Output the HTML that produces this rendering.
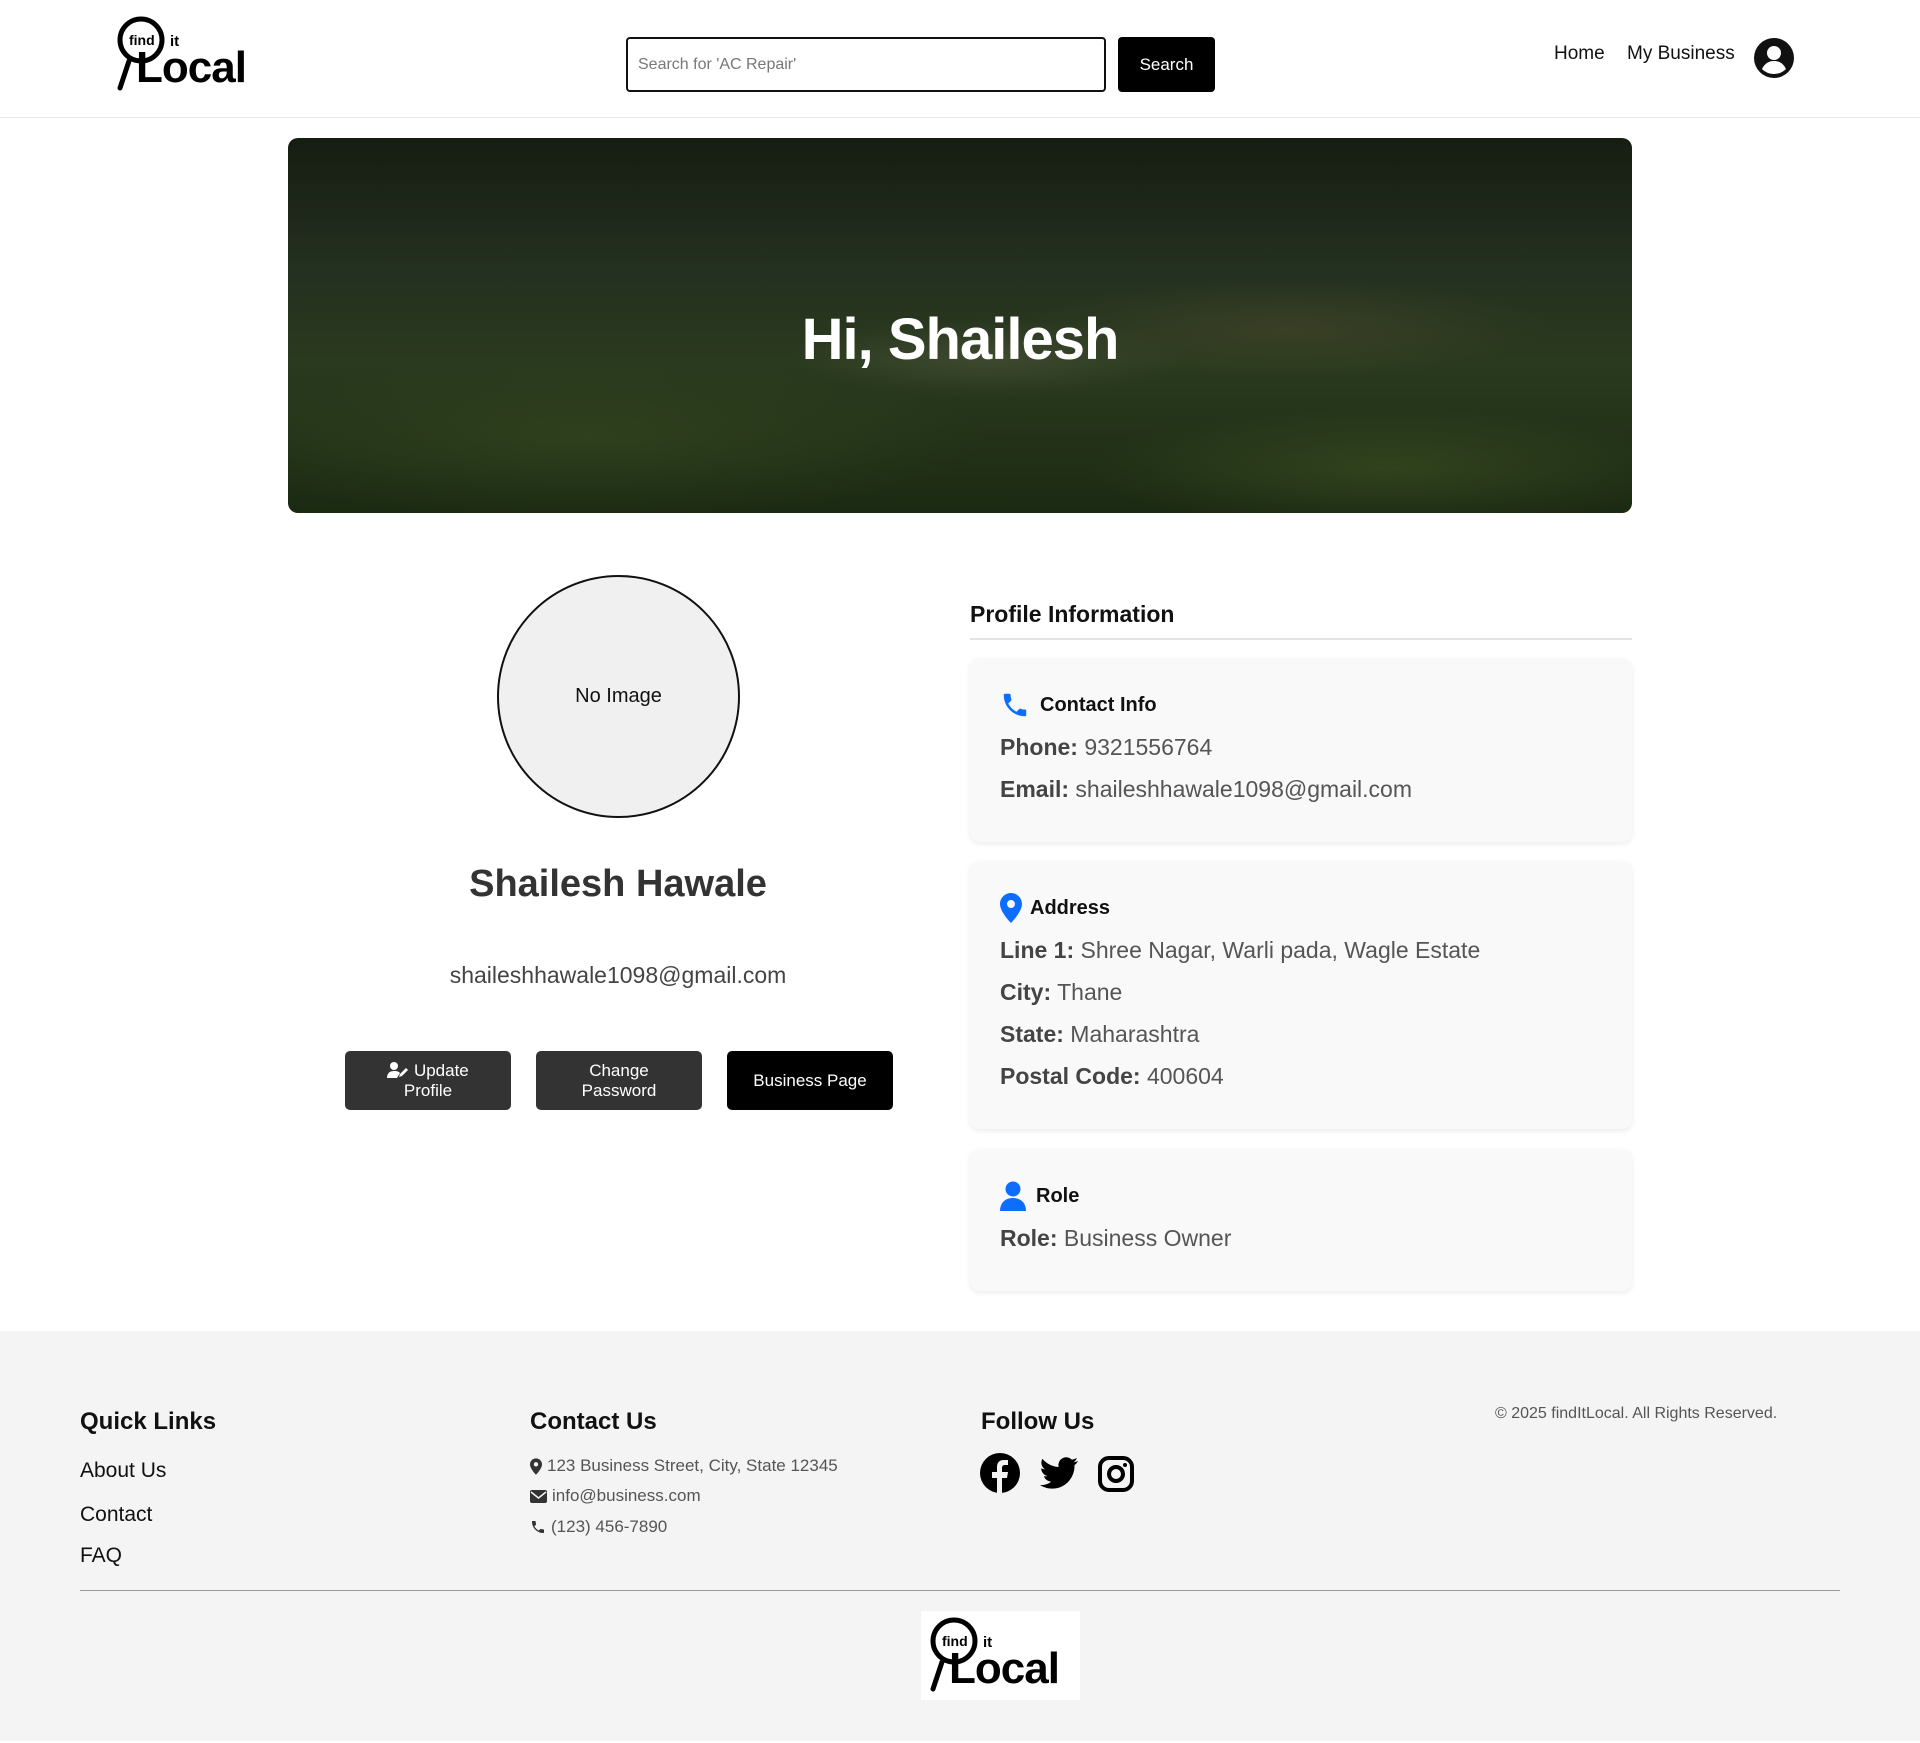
<!DOCTYPE html>
<html><head><meta charset="utf-8"><style>
*{box-sizing:border-box;margin:0;padding:0}
body{width:1920px;height:1743px;background:#fff;font-family:"Liberation Sans",sans-serif;color:#222;position:relative;overflow:hidden}
.abs{position:absolute}
header{position:absolute;left:0;top:0;width:1920px;height:118px;border-bottom:1px solid #e8e8e8}
.search{left:626px;top:37px;width:480px;height:55px;border:2px solid #111;border-radius:4px;font-size:16px;color:#777;padding:17px 10px}
.sbtn{left:1118px;top:37px;width:97px;height:55px;background:#000;color:#fff;border-radius:4px;font-size:17px;text-align:center;line-height:55px}
.nav{top:43px;font-size:19px;color:#111}
.banner{left:288px;top:138px;width:1344px;height:375px;border-radius:10px;overflow:hidden;
background:
radial-gradient(ellipse 300px 60px at 1100px 330px,rgba(70,90,40,.45),transparent),
radial-gradient(ellipse 400px 80px at 300px 300px,rgba(60,80,35,.45),transparent),
radial-gradient(ellipse 260px 50px at 1000px 190px,rgba(90,80,50,.35),transparent),
radial-gradient(ellipse 200px 40px at 700px 220px,rgba(120,120,100,.25),transparent),
linear-gradient(180deg,#161d12 0%,#243020 35%,#2a3a1e 60%,#1b2a12 100%)}
.banner h1{position:absolute;width:100%;top:168px;text-align:center;color:#fff;font-size:58px;font-weight:bold;letter-spacing:-1px}
.circle{left:497px;top:575px;width:243px;height:243px;border-radius:50%;border:2px solid #111;background:#f0f0f0;text-align:center;line-height:239px;font-size:20px;color:#111}
.name{left:318px;width:600px;top:863px;text-align:center;font-size:38px;font-weight:bold;color:#333}
.email{left:318px;width:600px;top:962px;text-align:center;font-size:23px;color:#444}
.btn{top:1051px;width:166px;height:59px;border-radius:5px;background:#333;color:#fff;font-size:17px;text-align:center;display:flex;align-items:center;justify-content:center;line-height:20px}
.ptitle{left:970px;top:601px;font-size:23px;font-weight:bold;color:#111}
.pline{left:970px;top:638px;width:662px;height:2px;background:#e3e3e3}
.card{left:970px;width:662px;background:#f9f9f9;border-radius:10px;box-shadow:0 2px 6px rgba(0,0,0,.08);padding:0 30px}
.card .t{font-size:20px;font-weight:bold;color:#111;display:flex;align-items:center;gap:10px;margin-top:32px;height:30px}
.card p{font-size:23px;color:#555;margin-top:13px;line-height:29px}
.card b{color:#444}
footer{position:absolute;left:0;top:1331px;width:1920px;height:410px;background:#f4f4f4}
footer h3{position:absolute;top:77px;font-size:24px;color:#111}
.fl{position:absolute;left:80px;font-size:21px;color:#111}
.fc{position:absolute;left:530px;font-size:17px;color:#555;display:flex;align-items:center;gap:5px}
</style></head><body>
<header>
 <div class="abs" style="left:116px;top:16px;width:140px;height:78px">
  <svg width="140" height="78" viewBox="0 0 140 78"><circle cx="25" cy="24" r="21" fill="none" stroke="#000" stroke-width="5"/><line x1="13" y1="45" x2="4" y2="72" stroke="#000" stroke-width="5" stroke-linecap="round"/>
  <text x="13" y="29" font-family="Liberation Sans" font-weight="bold" font-size="14">find</text>
  <text x="54" y="30" font-family="Liberation Sans" font-weight="bold" font-size="15">it</text>
  <text x="20" y="66" font-family="Liberation Sans" font-weight="bold" font-size="44" letter-spacing="-1">Local</text></svg>
 </div>
 <div class="abs search">Search for 'AC Repair'</div>
 <div class="abs sbtn">Search</div>
 <div class="abs nav" style="left:1554px">Home</div>
 <div class="abs nav" style="left:1627px">My Business</div>
 <svg class="abs" style="left:1754px;top:38px" width="40" height="40" viewBox="0 0 40 40"><circle cx="20" cy="20" r="20" fill="#111"/><circle cx="20" cy="15" r="7" fill="#fff"/><path d="M8 31c3-6 7-8 12-8s9 2 12 8c-3 3-7 5-12 5s-9-2-12-5z" fill="#fff"/></svg>
</header>
<div class="abs banner"><h1>Hi, Shailesh</h1></div>
<div class="abs circle">No Image</div>
<div class="abs name">Shailesh Hawale</div>
<div class="abs email">shaileshhawale1098@gmail.com</div>
<div class="abs btn" style="left:345px"><span><svg width="22" height="16" viewBox="0 0 22 16" style="vertical-align:-2px"><circle cx="7" cy="4" r="4" fill="#fff"/><path d="M0 16c0-5 3-7 7-7s5 1 6 2l-3 5z" fill="#fff"/><path d="M12 15l1-3 6-6 2 2-6 6z" fill="#fff"/></svg> Update<br>Profile</span></div>
<div class="abs btn" style="left:536px"><span>Change<br>Password</span></div>
<div class="abs btn" style="left:727px;background:#000">Business Page</div>
<div class="abs ptitle">Profile Information</div>
<div class="abs pline"></div>
<div class="abs card" style="top:658px;height:184px">
 <div class="t"><svg width="30" height="30" viewBox="0 0 24 24"><path d="M6.6 10.8c1.4 2.8 3.8 5.1 6.6 6.6l2.2-2.2c.3-.3.7-.4 1-.2 1.1.4 2.3.6 3.6.6.6 0 1 .4 1 1V20c0 .6-.4 1-1 1C10.6 21 3 13.4 3 4c0-.6.4-1 1-1h3.5c.6 0 1 .4 1 1 0 1.3.2 2.5.6 3.6.1.3 0 .7-.2 1z" fill="#0d6efd"/></svg>Contact Info</div>
 <p><b>Phone:</b> 9321556764</p>
 <p><b>Email:</b> shaileshhawale1098@gmail.com</p>
</div>
<div class="abs card" style="top:861px;height:268px">
 <div class="t" style="gap:8px"><svg width="22" height="30" viewBox="0 0 22 30"><path d="M11 0C5 0 0 5 0 11c0 8 11 19 11 19s11-11 11-19C22 5 17 0 11 0zm0 15a4 4 0 110-8 4 4 0 010 8z" fill="#0d6efd"/></svg>Address</div>
 <p><b>Line 1:</b> Shree Nagar, Warli pada, Wagle Estate</p>
 <p><b>City:</b> Thane</p>
 <p><b>State:</b> Maharashtra</p>
 <p><b>Postal Code:</b> 400604</p>
</div>
<div class="abs card" style="top:1149px;height:142px">
 <div class="t"><svg width="26" height="30" viewBox="0 0 26 30"><circle cx="13" cy="8" r="7.5" fill="#0d6efd"/><path d="M0 30c0-8 5-13 13-13s13 5 13 13z" fill="#0d6efd"/></svg>Role</div>
 <p><b>Role:</b> Business Owner</p>
</div>
<footer>
 <h3 style="left:80px">Quick Links</h3>
 <h3 style="left:530px">Contact Us</h3>
 <h3 style="left:981px">Follow Us</h3>
 <div class="abs" style="left:1495px;top:74px;font-size:16px;color:#555">© 2025 findItLocal. All Rights Reserved.</div>
 <div class="fl" style="top:128px">About Us</div>
 <div class="fl" style="top:172px">Contact</div>
 <div class="fl" style="top:213px">FAQ</div>
 <div class="fc" style="top:125px"><svg width="12" height="17" viewBox="0 0 22 30"><path d="M11 0C5 0 0 5 0 11c0 8 11 19 11 19s11-11 11-19C22 5 17 0 11 0zm0 15a4 4 0 110-8 4 4 0 010 8z" fill="#333"/></svg>123 Business Street, City, State 12345</div>
 <div class="fc" style="top:155px"><svg width="17" height="13" viewBox="0 0 17 13"><rect width="17" height="13" rx="2" fill="#333"/><path d="M1 2l7.5 6L16 2" stroke="#f4f4f4" stroke-width="1.5" fill="none"/></svg>info@business.com</div>
 <div class="fc" style="top:186px"><svg width="16" height="16" viewBox="0 0 24 24"><path d="M6.6 10.8c1.4 2.8 3.8 5.1 6.6 6.6l2.2-2.2c.3-.3.7-.4 1-.2 1.1.4 2.3.6 3.6.6.6 0 1 .4 1 1V20c0 .6-.4 1-1 1C10.6 21 3 13.4 3 4c0-.6.4-1 1-1h3.5c.6 0 1 .4 1 1 0 1.3.2 2.5.6 3.6.1.3 0 .7-.2 1z" fill="#333"/></svg>(123) 456-7890</div>
 <svg class="abs" style="left:980px;top:122px" width="156" height="42" viewBox="0 0 156 42">
  <circle cx="20" cy="20" r="20" fill="#000"/><path d="M22 41V25h5l1-6h-6v-4c0-2 1-3 3-3h3V7h-4c-5 0-7 3-7 7v5h-5v6h5v16z" fill="#f4f4f4"/>
  <path d="M98 8c-1.5.7-3 1-4.5 1.2 1.6-1 2.8-2.5 3.4-4.3-1.5.9-3.2 1.5-5 1.9A7.8 7.8 0 0078.6 14c-6.5-.3-12.3-3.4-16.2-8.2-2 3.6-1 8 2.4 10.4-1.3 0-2.5-.4-3.6-1 0 3.8 2.7 7 6.3 7.8-1.2.3-2.4.4-3.6.1 1 3.2 4 5.4 7.4 5.5A15.7 15.7 0 0160 32c3.5 2.3 7.7 3.6 12 3.6 14.5 0 22.5-12 22.5-22.5v-1c1.5-1.1 2.8-2.5 3.5-4.1z" fill="#000"/>
  <rect x="120" y="5" width="32" height="32" rx="9" fill="none" stroke="#000" stroke-width="4"/><circle cx="136" cy="21" r="7" fill="none" stroke="#000" stroke-width="4"/><circle cx="145" cy="12" r="2" fill="#000"/>
 </svg>
 <div class="abs" style="left:80px;top:259px;width:1760px;height:1px;background:#999"></div>
 <div class="abs" style="left:921px;top:280px;width:159px;height:89px;background:#fff">
  <svg viewBox="0 0 140 78" style="margin:6px 0 0 8px;width:140px;height:78px"><circle cx="25" cy="24" r="21" fill="none" stroke="#000" stroke-width="5"/><line x1="13" y1="45" x2="4" y2="72" stroke="#000" stroke-width="5" stroke-linecap="round"/>
  <text x="13" y="29" font-family="Liberation Sans" font-weight="bold" font-size="14">find</text>
  <text x="54" y="30" font-family="Liberation Sans" font-weight="bold" font-size="15">it</text>
  <text x="20" y="66" font-family="Liberation Sans" font-weight="bold" font-size="44" letter-spacing="-1">Local</text></svg>
 </div>
</footer>
</body></html>
